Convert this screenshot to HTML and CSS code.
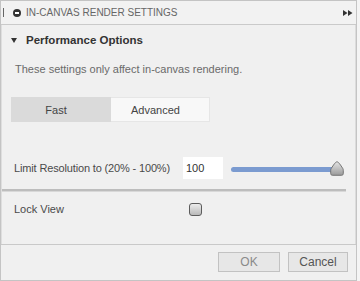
FILE: index.html
```html
<!DOCTYPE html>
<html lang="en">
<head>
  <meta charset="UTF-8">
  <title>In-canvas Render Settings</title>
  <link rel="stylesheet" href="styles.css">
</head>
<body>
<div class="dialog">
  <div class="titlebar">
    <span class="grip"></span>
    <span class="title-icon"></span>
    <span class="title">IN-CANVAS RENDER SETTINGS</span>
    <svg class="expand" width="10" height="6" viewBox="0 0 10 6">
      <path d="M0 0L4.5 3L0 6Z M5 0L9.5 3L5 6Z" fill="#333"/>
    </svg>
  </div>

  <div class="panel">
    <div class="section-head">
      <svg class="caret" width="6" height="5" viewBox="0 0 6 5">
        <path d="M0 0H6L3 5Z" fill="#333"/>
      </svg>
      <span>Performance Options</span>
    </div>
    <p class="desc">These settings only affect in-canvas rendering.</p>

    <div class="tabs">
      <div class="tab active">Fast</div>
      <div class="tab">Advanced</div>
    </div>

    <div class="res-row">
      <label class="res-label">Limit Resolution to (20% - 100%)</label>
      <input class="res-input" type="text" value="100">
      <div class="slider">
        <div class="track"></div>
        <svg class="thumb" width="14" height="15" viewBox="0 0 14 15">
          <defs>
            <linearGradient id="thumb-fill" x1="0" y1="0" x2="0" y2="1">
              <stop offset="0" stop-color="#e4e4e4"/>
              <stop offset="1" stop-color="#9a9a9a"/>
            </linearGradient>
          </defs>
          <path d="M7 0.8C8 0.8 9 2 10.5 4L12.8 7.5C13.2 8.2 13.3 8.8 13.3 9.5V12.5C13.3 13.6 12.6 14.3 11.5 14.3H2.5C1.4 14.3 0.7 13.6 0.7 12.5V9.5C0.7 8.8 0.8 8.2 1.2 7.5L3.5 4C5 2 6 0.8 7 0.8Z" fill="url(#thumb-fill)" stroke="#6b6b6b" stroke-width="0.9"/>
        </svg>
      </div>
    </div>

    <div class="separator"></div>

    <div class="lock-row">
      <label class="lock-label">Lock View</label>
      <span class="checkbox"></span>
    </div>
  </div>

  <div class="footer">
    <button class="btn btn-ok" type="button">OK</button>
    <button class="btn" type="button">Cancel</button>
  </div>
</div>
</body>
</html>
```

FILE: styles.css
```css
* {
  margin: 0;
  padding: 0;
  box-sizing: border-box;
}

body {
  width: 360px;
  height: 281px;
  background: #f4f4f4;
  font-family: "Liberation Sans", Arial, sans-serif;
  font-size: 11px;
  color: #4a4a4a;
  overflow: hidden;
}

.dialog {
  width: 357px;
  height: 281px;
  background: #f0f0f0;
  border: 1px solid #c4c4c4;
  display: flex;
  flex-direction: column;
}

/* title bar */
.titlebar {
  height: 24px;
  flex-shrink: 0;
  display: flex;
  align-items: center;
  border-bottom: 1px solid #cacaca;
  background: #f2f2f2;
}

.grip {
  width: 1px;
  height: 9px;
  margin-left: 2px;
  background: #666;
}

.title-icon {
  position: relative;
  width: 8px;
  height: 8px;
  margin-left: 9px;
  border-radius: 50%;
  background: #333;
}

.title-icon::after {
  content: "";
  position: absolute;
  left: 2px;
  top: 3px;
  width: 4px;
  height: 2px;
  background: #fff;
}

.title {
  margin-left: 5px;
  font-size: 10px;
  color: #666;
}

.expand {
  margin-left: auto;
  margin-right: 3px;
}

/* content */
.panel {
  flex: 1;
  border-left: 1px solid #dedede;
  border-right: 1px solid #dcdcdc;
}

.section-head {
  display: flex;
  align-items: center;
  height: 16px;
  margin-top: 7px;
  padding-left: 9px;
  font-size: 11.5px;
  font-weight: bold;
  color: #333;
}

.caret {
  margin-right: 9px;
}

.desc {
  margin-top: 14px;
  padding-left: 13px;
  line-height: 14px;
  color: #6a6a6a;
}

.tabs {
  display: flex;
  margin-top: 21px;
  margin-left: 9px;
}

.tab {
  width: 99px;
  height: 25px;
  line-height: 25px;
  padding-right: 9px;
  text-align: center;
  color: #444;
  background: #f8f8f8;
  border: 1px solid #e6e6e6;
  border-left: none;
}

.tab.active {
  width: 100px;
  background: #dadada;
  border-color: #dadada;
}

.res-row {
  display: flex;
  align-items: center;
  height: 22px;
  margin-top: 35px;
  padding-left: 12px;
}

.res-label {
  width: 169px;
  letter-spacing: -0.15px;
}

.res-input {
  width: 40px;
  height: 22px;
  border: none;
  background: #fff;
  padding-left: 3px;
  font-family: inherit;
  font-size: 11px;
  color: #333;
  outline: none;
}

.slider {
  position: relative;
  width: 113px;
  height: 22px;
  margin-left: 8px;
}

.track {
  position: absolute;
  left: 0;
  top: 10px;
  width: 106px;
  height: 5px;
  border-radius: 3px;
  background: #7b9bd0;
}

.thumb {
  position: absolute;
  left: 99px;
  top: 4px;
}

.separator {
  width: 344px;
  margin-top: 10px;
  border-top: 2px solid #bdbdbd;
  border-bottom: 1px solid #d8d8d8;
}

.lock-row {
  display: flex;
  align-items: center;
  height: 16px;
  margin-top: 9px;
  padding-left: 12px;
}

.lock-label {
  width: 175px;
}

.checkbox {
  width: 13px;
  height: 13px;
  border: 1px solid #5c5c5c;
  border-radius: 3px;
  background: linear-gradient(#ececec, #b9b9b9);
}

/* footer */
.footer {
  height: 36px;
  flex-shrink: 0;
  display: flex;
  justify-content: flex-end;
  align-items: flex-start;
  gap: 8px;
  padding-top: 7px;
  padding-right: 8px;
  border-top: 1px solid #c9c9c9;
}

.btn {
  width: 60px;
  height: 20px;
  border: 1px solid #c2c2c2;
  background: #e7e7e7;
  font-family: inherit;
  font-size: 12px;
  color: #555;
}

.btn-ok {
  width: 62px;
  color: #8a8a8a;
}
```
